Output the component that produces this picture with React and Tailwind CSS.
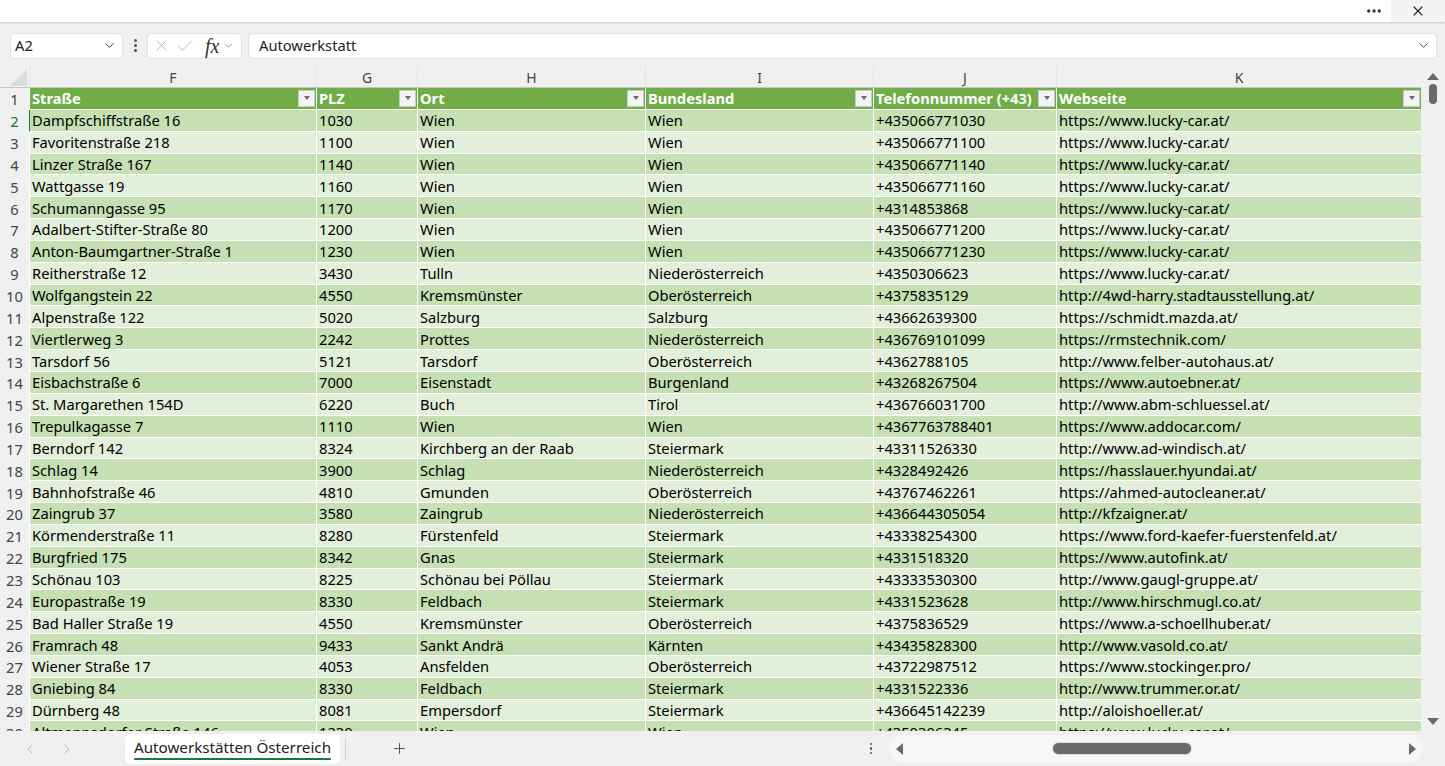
import React from 'react'
import { X, Check, ChevronDown, ChevronLeft, ChevronRight, Plus, MoreHorizontal } from 'lucide-react'

const cols = [
  { letter: 'F', title: 'Straße', w: 'w-[287px]' },
  { letter: 'G', title: 'PLZ', w: 'w-[101px]' },
  { letter: 'H', title: 'Ort', w: 'w-[228px]' },
  { letter: 'I', title: 'Bundesland', w: 'w-[228px]' },
  { letter: 'J', title: 'Telefonnummer (+43)', w: 'w-[183px]' },
  { letter: 'K', title: 'Webseite', w: 'w-[365px]' },
]

const rows = [
  ['Dampfschiffstraße 16', '1030', 'Wien', 'Wien', '+435066771030', 'https://www.lucky-car.at/'],
  ['Favoritenstraße 218', '1100', 'Wien', 'Wien', '+435066771100', 'https://www.lucky-car.at/'],
  ['Linzer Straße 167', '1140', 'Wien', 'Wien', '+435066771140', 'https://www.lucky-car.at/'],
  ['Wattgasse 19', '1160', 'Wien', 'Wien', '+435066771160', 'https://www.lucky-car.at/'],
  ['Schumanngasse 95', '1170', 'Wien', 'Wien', '+4314853868', 'https://www.lucky-car.at/'],
  ['Adalbert-Stifter-Straße 80', '1200', 'Wien', 'Wien', '+435066771200', 'https://www.lucky-car.at/'],
  ['Anton-Baumgartner-Straße 1', '1230', 'Wien', 'Wien', '+435066771230', 'https://www.lucky-car.at/'],
  ['Reitherstraße 12', '3430', 'Tulln', 'Niederösterreich', '+4350306623', 'https://www.lucky-car.at/'],
  ['Wolfgangstein 22', '4550', 'Kremsmünster', 'Oberösterreich', '+4375835129', 'http://4wd-harry.stadtausstellung.at/'],
  ['Alpenstraße 122', '5020', 'Salzburg', 'Salzburg', '+43662639300', 'https://schmidt.mazda.at/'],
  ['Viertlerweg 3', '2242', 'Prottes', 'Niederösterreich', '+436769101099', 'https://rmstechnik.com/'],
  ['Tarsdorf 56', '5121', 'Tarsdorf', 'Oberösterreich', '+4362788105', 'http://www.felber-autohaus.at/'],
  ['Eisbachstraße 6', '7000', 'Eisenstadt', 'Burgenland', '+43268267504', 'https://www.autoebner.at/'],
  ['St. Margarethen 154D', '6220', 'Buch', 'Tirol', '+436766031700', 'http://www.abm-schluessel.at/'],
  ['Trepulkagasse 7', '1110', 'Wien', 'Wien', '+4367763788401', 'https://www.addocar.com/'],
  ['Berndorf 142', '8324', 'Kirchberg an der Raab', 'Steiermark', '+43311526330', 'http://www.ad-windisch.at/'],
  ['Schlag 14', '3900', 'Schlag', 'Niederösterreich', '+4328492426', 'https://hasslauer.hyundai.at/'],
  ['Bahnhofstraße 46', '4810', 'Gmunden', 'Oberösterreich', '+43767462261', 'https://ahmed-autocleaner.at/'],
  ['Zaingrub 37', '3580', 'Zaingrub', 'Niederösterreich', '+436644305054', 'http://kfzaigner.at/'],
  ['Körmenderstraße 11', '8280', 'Fürstenfeld', 'Steiermark', '+43338254300', 'https://www.ford-kaefer-fuerstenfeld.at/'],
  ['Burgfried 175', '8342', 'Gnas', 'Steiermark', '+4331518320', 'https://www.autofink.at/'],
  ['Schönau 103', '8225', 'Schönau bei Pöllau', 'Steiermark', '+43333530300', 'http://www.gaugl-gruppe.at/'],
  ['Europastraße 19', '8330', 'Feldbach', 'Steiermark', '+4331523628', 'http://www.hirschmugl.co.at/'],
  ['Bad Haller Straße 19', '4550', 'Kremsmünster', 'Oberösterreich', '+4375836529', 'https://www.a-schoellhuber.at/'],
  ['Framrach 48', '9433', 'Sankt Andrä', 'Kärnten', '+43435828300', 'http://www.vasold.co.at/'],
  ['Wiener Straße 17', '4053', 'Ansfelden', 'Oberösterreich', '+43722987512', 'https://www.stockinger.pro/'],
  ['Gniebing 84', '8330', 'Feldbach', 'Steiermark', '+4331522336', 'http://www.trummer.or.at/'],
  ['Dürnberg 48', '8081', 'Empersdorf', 'Steiermark', '+436645142239', 'http://aloishoeller.at/'],
  ['Altmannsdorfer Straße 146', '1230', 'Wien', 'Wien', '+4350306345', 'https://www.lucky-car.at/'],
]

function FilterButton() {
  return (
    <div className="w-[17px] h-[17px] bg-[#f3f3f3] border border-[#c9c9c9] flex items-center justify-center shrink-0">
      <div className="w-0 h-0 border-l-[3.5px] border-r-[3.5px] border-t-[4px] border-l-transparent border-r-transparent border-t-[#6b6b6b]" />
    </div>
  )
}

export default function App() {
  return (
    <div
      className="w-[1445px] h-[766px] overflow-hidden bg-[#f0f0f0] flex flex-col text-black"
      style={{ fontFamily: '"Noto Sans", "Open Sans", sans-serif' }}
    >
      {/* window title strip */}
      <div className="h-[22px] bg-white flex items-center justify-end shadow-[0_1px_2px_rgba(0,0,0,0.18)] z-10 shrink-0">
        <MoreHorizontal className="w-[18px] h-[18px] text-[#333] mr-[8px]" strokeWidth={2.5} />
        <div className="w-[54px] h-[22px] bg-[#f4f4f4] flex items-center justify-center">
          <X className="w-[16px] h-[16px] text-[#222]" strokeWidth={1.6} />
        </div>
      </div>

      {/* formula bar */}
      <div className="h-[45px] flex items-center pt-[2px] pl-[10px] pr-[8px] gap-[6px] shrink-0">
        <div className="w-[113px] h-[26px] bg-white rounded-[5px] border border-[#e2e2e2] flex items-center justify-between pl-[4px] pr-[5px]">
          <span className="text-[14.7px] text-[#222]">A2</span>
          <ChevronDown className="w-[15px] h-[15px] text-[#444]" strokeWidth={1.6} />
        </div>
        <div className="w-[12px] flex flex-col items-center gap-[2px]">
          <span className="w-[3px] h-[3px] rounded-full bg-[#555]" />
          <span className="w-[3px] h-[3px] rounded-full bg-[#555]" />
          <span className="w-[3px] h-[3px] rounded-full bg-[#555]" />
        </div>
        <div className="w-[95px] h-[26px] bg-white rounded-[5px] border border-[#e2e2e2] flex items-center pl-[4px] gap-[4px]">
          <X className="w-[19px] h-[19px] text-[#b5b5b5]" strokeWidth={1.2} />
          <Check className="w-[20px] h-[20px] text-[#b5b5b5]" strokeWidth={1.2} />
          <span className="text-[20px] italic text-[#333] leading-none ml-[6px]" style={{ fontFamily: '"Liberation Serif", serif' }}>fx</span>
          <ChevronDown className="w-[13px] h-[13px] text-[#777] -ml-[1px]" strokeWidth={1.4} />
        </div>
        <div className="flex-1 h-[26px] bg-white rounded-[5px] border border-[#e2e2e2] flex items-center justify-between pl-[10px] pr-[5px]">
          <span className="text-[14.7px] text-[#222]">Autowerkstatt</span>
          <ChevronDown className="w-[15px] h-[15px] text-[#444]" strokeWidth={1.6} />
        </div>
      </div>

      {/* grid */}
      <div className="flex h-[664px] shrink-0">
        <div className="flex-1 overflow-hidden">
          {/* column letters */}
          <div className="flex h-[21px] border-b border-[#c6c6c6]">
            <div className="w-[29px] h-full relative shrink-0">
              <div className="absolute left-[10px] bottom-[1px] w-0 h-0 border-b-[17px] border-l-[17px] border-b-[#dcdcdc] border-l-transparent" />
            </div>
            {cols.map((c) => (
              <div key={c.letter} className={`${c.w} shrink-0 h-full flex items-center justify-center border-l border-[#e4e4e4] text-[14px] text-[#444]`}>
                {c.letter}
              </div>
            ))}
          </div>

          {/* table header */}
          <div className="flex h-[21.85px]">
            <div className="w-[29px] shrink-0 flex items-center justify-center text-[14.7px] text-[#444]">1</div>
            {cols.map((c) => (
              <div key={c.title} className={`${c.w} shrink-0 h-full bg-[#70ad47] border-l border-white border-b border-b-white flex items-center justify-between pl-[2px] pr-[1px]`}>
                <span className="text-[14.7px] font-bold text-white">{c.title}</span>
                <FilterButton />
              </div>
            ))}
          </div>

          {rows.map((r, i) => {
            const n = i + 2
            const bg = n % 2 === 0 ? 'bg-[#c6e0b4]' : 'bg-[#e2efda]'
            return (
              <div key={n} className="flex h-[21.85px]">
                <div className={`w-[29px] shrink-0 flex items-center justify-center pt-[1px] text-[14.7px] ${n === 2 ? 'text-[#217346]' : 'text-[#444]'}`}>
                  {n}
                </div>
                {r.map((v, j) => (
                  <div
                    key={j}
                    className={`${cols[j].w} shrink-0 h-full ${bg} border-l ${n === 2 && j === 0 ? 'border-l-[#217346]' : 'border-white'} border-b border-b-white flex items-center pl-[2px] pt-[1px] text-[14.7px] leading-[19px] whitespace-nowrap`}
                  >
                    {v}
                  </div>
                ))}
              </div>
            )
          })}
        </div>

        {/* vertical scrollbar */}
        <div className="w-[24px] shrink-0 flex flex-col items-center pt-[6px] pb-[6px]">
          <div className="w-0 h-0 border-l-[6px] border-r-[6px] border-b-[7px] border-l-transparent border-r-transparent border-b-[#6a6a6a]" />
          <div className="w-[8px] h-[20px] rounded-full bg-[#6a6a6a] mt-[4px]" />
          <div className="flex-1" />
          <div className="w-0 h-0 border-l-[6px] border-r-[6px] border-t-[7px] border-l-transparent border-r-transparent border-t-[#6a6a6a]" />
        </div>
      </div>

      {/* sheet tabs */}
      <div className="flex-1 flex items-center">
        <div className="w-[125px] flex items-center pl-[22px] gap-[21px] shrink-0">
          <ChevronLeft className="w-[16px] h-[16px] text-[#b0b0b0]" strokeWidth={1.4} />
          <ChevronRight className="w-[16px] h-[16px] text-[#b0b0b0]" strokeWidth={1.4} />
        </div>
        <div className="w-[215px] h-[30px] bg-white rounded-[5px] flex flex-col items-center justify-center shrink-0 shadow-[0_0_1px_rgba(0,0,0,0.1)]">
          <span className="text-[15.2px] text-[#222] leading-[20px]">Autowerkstätten Österreich</span>
          <div className="w-[197px] h-[2.5px] bg-[#107c41] rounded-full mt-[1px]" />
        </div>
        <div className="w-[1px] h-[22px] bg-[#d0d0d0] ml-[5px]" />
        <Plus className="w-[17px] h-[17px] text-[#555] ml-[45px]" strokeWidth={1.4} />
        <div className="flex-1" />
        <div className="flex flex-col items-center gap-[2px] mr-[18px]">
          <span className="w-[2.5px] h-[2.5px] rounded-full bg-[#555]" />
          <span className="w-[2.5px] h-[2.5px] rounded-full bg-[#555]" />
          <span className="w-[2.5px] h-[2.5px] rounded-full bg-[#555]" />
        </div>
        <div className="w-[532px] h-[27px] rounded-[10px] bg-[#f7f7f7] flex items-center px-[6px] mr-[23px]">
          <div className="w-0 h-0 border-t-[6px] border-b-[6px] border-r-[7px] border-t-transparent border-b-transparent border-r-[#6a6a6a]" />
          <div className="w-[138px] h-[11px] rounded-full bg-[#6a6a6a] ml-[150px] shadow-[0_0_0_1px_#d8d8d8]" />
          <div className="flex-1" />
          <div className="w-0 h-0 border-t-[6px] border-b-[6px] border-l-[7px] border-t-transparent border-b-transparent border-l-[#6a6a6a]" />
        </div>
      </div>
    </div>
  )
}
